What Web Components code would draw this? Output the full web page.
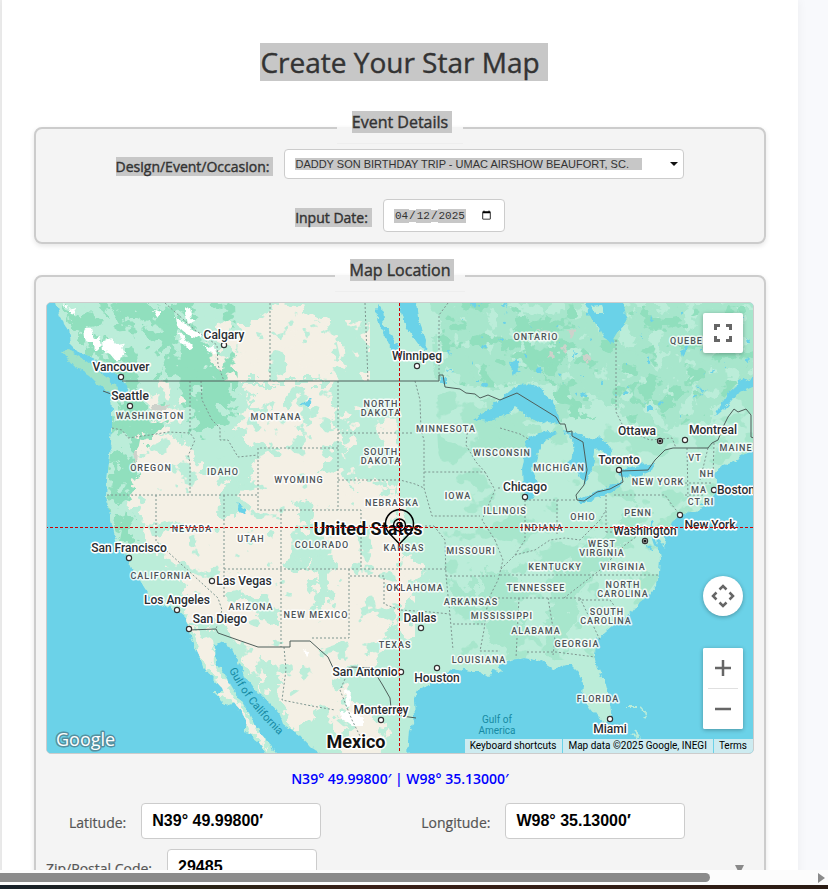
<!DOCTYPE html>
<html lang="en">
<head>
<meta charset="utf-8">
<title>Create Your Star Map</title>
<style>
  body { margin: 0; background: #f8f9fc; font-family: "Open Sans", sans-serif; color: #333; --mark: #c7c7c7; --line: #ccc; }
</style>
</head>
<body>
<star-page>
  <marked-text slot="title">Create Your Star Map</marked-text>
  <form-section heading="Event Details" roomy>
    <select-field label="Design/Event/Occasion:" value="DADDY SON BIRTHDAY TRIP - UMAC AIRSHOW BEAUFORT, SC."></select-field>
    <date-field label="Input Date:" value="2025-04-12"></date-field>
  </form-section>
  <form-section heading="Map Location">
    <location-map></location-map>
    <coordinate-readout>N39° 49.99800′ | W98° 35.13000′</coordinate-readout>
    <field-row>
      <text-field label="Latitude:" value="N39° 49.99800′"></text-field>
      <text-field label="Longitude:" value="W98° 35.13000′"></text-field>
    </field-row>
    <field-row spread>
      <text-field label="Zip/Postal Code:" value="29485" short></text-field>
      <down-arrow></down-arrow>
    </field-row>
  </form-section>
</star-page>

<script>
const define = (name, render) => customElements.define(name, class extends HTMLElement {
  connectedCallback() {
    if (this.shadowRoot) return;
    this.attachShadow({ mode: "open" }).innerHTML = render(this);
  }
});

define("marked-text", () => `
  <style>
    :host { display: inline-block; background: var(--mark); padding-right: 8px; margin-right: -8px; line-height: normal; -webkit-text-stroke: .4px currentColor; }
    :host([tight]) { padding-right: 4px; margin-right: -4px; }
  </style><slot></slot>`);

define("star-page", () => `
  <style>
    :host { display: flex; flex-direction: column; height: 100vh; }
    .view { flex: 1; min-height: 0; overflow: hidden; padding: 0 30px 0 2px; background: linear-gradient(90deg, #eee 2px, #f8f9fc 2px); }
    main { background: #fff; min-height: 100%; box-sizing: border-box; padding: 43px 32px 0; box-shadow: 0 0 10px rgba(0,0,0,.06); }
    h1 { margin: 0 0 30px; font-size: 28px; line-height: 38px; font-weight: 500; text-align: center; }
    .bar { height: 15px; flex: none; display: flex; align-items: center; justify-content: space-between; background: #fcfcfc; padding-right: 3px; }
    .thumb { width: 86%; height: 9px; background: #8b8b8b; border-radius: 0 5px 5px 0; }
    .edge { height: 4px; flex: none; background: linear-gradient(90deg, #17212a, #2a2417 25%, #3a2018 45%, #2b1c14); }
  </style>
  <div class="view"><main><h1><slot name="title"></slot></h1><slot></slot></main></div>
  <div class="bar"><div class="thumb"></div><svg width="7" height="10"><path d="M0 0L7 5L0 10Z" fill="#8b8b8b"/></svg></div>
  <div class="edge"></div>`);

define("form-section", el => `
  <style>
    :host { display: block; margin-bottom: 15px; }
    fieldset { margin: 0; min-width: 0; border: 2px solid var(--line); border-radius: 8px; background: #f4f4f4; padding: 10px; box-shadow: 0 2px 5px rgba(0,0,0,.1); }
    legend { margin: 0 auto; padding: 0 15px 10px; border-bottom: 1px solid #eee; font-size: 16px; line-height: 22px; font-weight: 500; }
    :host([roomy]) fieldset { padding-top: 5px; }
    :host([roomy]) .body { display: grid; gap: 20px; justify-items: center; }
  </style>
  <fieldset><legend><marked-text tight>${el.getAttribute("heading")}</marked-text></legend><div class="body"><slot></slot></div></fieldset>`);

const fieldCss = `
  :host { display: flex; align-items: center; gap: 15px; }
  label { font-size: 14px; line-height: 19px; font-weight: 500; padding-top: 4px; white-space: nowrap; }
  input, select { box-sizing: border-box; margin: 0; border: 1px solid var(--line); border-radius: 4px; background-color: #fff; }`;

define("select-field", el => `
  <style>${fieldCss}
    .box { display: grid; align-items: center; width: 400px; }
    .box > * { grid-area: 1 / 1; }
    select { appearance: none; width: 100%; height: 30px; padding: 0 10px; font: 11px "Liberation Sans", Arial, sans-serif; color: #333;
      background-image: linear-gradient(var(--mark), var(--mark)); background-size: 347px 12px; background-position: 10px 8px; background-repeat: no-repeat; }
    svg { justify-self: end; margin-right: 6px; pointer-events: none; }
  </style>
  <label for="c"><marked-text tight>${el.getAttribute("label")}</marked-text></label>
  <span class="box"><select id="c"><option>${el.getAttribute("value")}</option></select>
  <svg width="8" height="4"><path d="M0 0H8L4 4Z" fill="#111"/></svg></span>`);

define("date-field", el => `
  <style>${fieldCss}
    input { width: 122px; height: 33px; padding: 0 10px; font: 11px "Liberation Mono", "Courier New", monospace; color: #333; }
    ::-webkit-datetime-edit-month-field, ::-webkit-datetime-edit-day-field, ::-webkit-datetime-edit-year-field, ::-webkit-datetime-edit-text { background: var(--mark); }
  </style>
  <label for="c"><marked-text tight>${el.getAttribute("label")}</marked-text></label>
  <input id="c" type="date" value="${el.getAttribute("value")}">`);

define("text-field", el => `
  <style>${fieldCss}
    label { font-weight: 400; color: #555; padding-top: 2px; -webkit-text-stroke: .2px currentColor; }
    input { width: 180px; height: 36px; padding: 0 10px; font: bold 16px "Liberation Sans", Arial, sans-serif; color: #000; }
    :host([short]) input { width: 150px; }
  </style>
  <label for="c">${el.getAttribute("label")}</label><input id="c" type="text" value="${el.getAttribute("value")}">`);

define("coordinate-readout", () => `
  <style>:host { display: block; padding: 15px 0 14px; font-size: 14px; line-height: 20px; font-weight: 600; color: #00f; text-align: center; }</style><slot></slot>`);

define("field-row", () => `
  <style>
    :host { display: flex; gap: 100px; padding-left: 23px; margin-bottom: 10px; }
    :host([spread]) { justify-content: space-between; padding: 0 10px 0 0; }
  </style><slot></slot>`);

define("down-arrow", () => `
  <style>:host { display: block; padding-top: 16px; } svg { display: block; }</style>
  <svg width="9" height="8"><path d="M0 0H9L5 8H4Z" fill="#888"/></svg>`);

/* Map data: all coordinates share the view box of the drawing. */
const LAND = "M55 300L60 318L68 330L70 344L78 352L92 357L104 366L114 372L121 379L125 384L128 394L122 397L119 391L111 394L112 412L112 430L110 455L107 480L106 496L110 515L113 528L117 545L124 551L128 558L133 570L141 582L147 592L160 604L170 608L178 611L185 617L189 628L193 642L199 655L203 667L213 678L222 688L224 693L213 693L220 698L228 706L234 702L240 710L246 720L246 732L258 741L268 756H278L270 745L258 730L248 712L238 697L228 680L216 662L215 645L220 642L233 648L238 660L245 675L257 692L262 695L272 705L280 715L283 724L300 735L310 746L324 756H408L410 730L415 718L414 700L416 692L425 688L432 680L442 675L452 668L470 671L480 671L488 676L493 670L502 673L498 665L510 660L525 658L540 661L553 669L570 664L578 672L583 685L582 695L590 708L598 718L607 725L611 715L610 700L606 685L598 668L595 655L597 640L606 632L620 620L632 612L640 602L648 596L657 585L659 572L660 558L658 546L655 538L651 525L657 535L664 548L666 535L672 522L680 515L690 512L712 505L700 505L708 500L714 494L720 488L714 477L722 465L735 460L748 452L760 446V295H50Z";
const ISLAND = "M62 352L70 350L82 358L94 367L106 377L114 384L118 392L110 392L100 386L90 376L74 366Z";
const SAND = ["M245 384L338 384L334 418L345 440L340 470L352 485L398 490L402 520L402 560L408 580L402 610L385 640L375 660L350 668L335 680L350 700L372 715L350 732L330 715L315 700L300 690L285 700L262 690L240 655L225 625L200 622L172 607L192 590L160 560L150 530L130 505L138 470L140 440L160 430L185 440L200 470L225 480L238 450L226 420Z",
 "M150 400L165 380L185 400L180 425L155 430Z","M205 345L220 360L232 320L258 320L290 300L315 318L335 335L342 365L330 380H238L215 364Z",
 "M185 622L212 640L216 662L240 700L256 730L270 752L252 740L240 708L222 692L205 668Z","M330 705L385 722L378 760H350Z","M403 556L424 562L420 580L405 584Z","M274 650L330 660L325 700L295 730L280 712L262 680Z"];
const GREEN_SAND = ["M230 395L243 402L240 425L254 455L240 500L236 525L218 515L228 480L216 450Z","M310 520L330 540L332 580L318 592L308 560L296 545Z","M292 548L308 556L306 572L290 566Z","M320 570L328 600L318 618L312 590Z","M240 590L262 600L282 614L276 622L250 610Z","M130 575L142 570L160 590L170 602L158 600Z","M262 654L276 672L274 700L294 726L306 745L288 730L264 690Z","M358 680L372 675L374 690L364 700Z","M340 440L344 470L320 476L330 450Z","M300 500L316 510L310 526L298 516Z","M250 400L268 410L262 420Z"];
const MID = ["M460 300H585L600 340H612L630 303H760V370L735 385L710 415L690 420L660 436L640 432L610 402L560 400L548 383L500 388L460 386L440 372L436 330Z","M480 395L510 415L540 428L530 450L505 452L482 440Z","M560 565L600 535L640 500L650 515L615 555L580 590L560 660L545 630Z","M480 570L520 580L515 655L495 645L485 620Z","M450 580L478 585L478 610L452 606Z"];
const DARK = ["M100 303H170L190 330L215 360L235 385L235 410L215 425L195 440L192 415L175 380L160 375L165 340L130 325Z","M122 400L145 395L150 430L140 480L120 520L108 500L115 460Z","M60 303L80 315L110 355L135 372L142 410L120 400L116 370L82 350Z","M520 318L550 325L575 345L560 372L530 365L505 350Z","M624 385L680 388L676 405L645 410Z","M540 368L570 390L590 420L560 412Z","M115 500L130 520L135 545L120 540L112 522Z"];
const SNOW = ["M83 328L91 328L93 336L97 344H91L84 338ZM94 338L99 336L102 346L98 350L94 346ZM103 340L112 338L116 344L122 343L125 352L121 360H115L110 354L104 352Z","M63 304L68 306L66 309ZM68 309L74 307L76 315L71 314Z","M184 308L190 310L194 322L188 324ZM175 318L184 322L192 330L202 335L200 338L186 334L176 326ZM178 331L184 338L194 348L190 350L180 340ZM204 347L214 346L217 354L208 352Z","M345 688L352 690L350 706L346 708ZM341 710L352 712L362 716L362 726L352 726L342 718Z","M152 310L162 312L157 318Z","M304 648L310 654L306 658Z"];
const GREY = ["M152 405L170 405L166 411L150 410Z","M536 328L550 330L548 336ZM546 356L552 350L554 358ZM560 348L567 344L566 354ZM582 355L590 356L588 362ZM568 332L576 330L572 338Z","M134 452L138 452L137 462L134 462Z"];
const LAKES = ["M473 419L490 408L510 391L517 385L530 384L540 387L545 395L553 400L558 412L560 424L548 421L540 424L528 416L515 407L508 414L500 418L490 421Z",
 "M527 440L535 434L548 431L558 434L545 440L537 455L533 470L537 482L534 497L528 501L523 490L522 470L525 452Z",
 "M563 430L580 434L590 440L600 437L610 448L612 457L602 453L596 447L594 460L590 478L584 483L577 470L568 462L574 452L572 439Z",
 "M577 500L590 494L605 487L622 481L621 487L604 495L590 502L580 502Z","M619 474L625 468L640 465L656 463L653 470L640 476L622 477Z",
 "M586 301L587 315L597 325L604 338L612 342L618 332L627 322L625 310L622 301Z","M398 301L416 301L418 318L426 340L425 352L416 340L405 325Z","M377 303L382 308L384 325L399 348L396 358L388 342L378 320Z",
 "M237 502L244 509L246 515L240 513Z","M760 374L742 381L728 393L717 412L714 418L725 408L738 393L760 384Z","M510 362L518 360L519 372L513 374Z","M118 378L127 385L128 397L121 390Z","M440 376L447 377L447 384L442 384Z","M681 350L690 340L690 345L683 356Z","M300 405L312 399L308 406ZM575 356L574 349L577 355ZM698 386L706 390L701 391ZM650 316L654 322L649 320Z"];
const SOLID = ["M122 381H439V375H443L445 387L460 389L466 393L475 394L480 398L488 395L500 400L517 393L556 417L560 424L565 424L567 432L572 431V436L583 442L587 470L584 485L576 495L577 500L584 501L597 492L610 489L623 482L621 471L648 470L655 460L665 450L673 448H708L712 443L718 440L724 425L728 417L734 409L738 412L746 409L751 415V437L756 439","M189 630L216 629L218 633L258 647H290V641H310L320 650L328 657L335 672L352 667L372 668L382 684L390 698L391 708L402 716L416 718","M103 391L111 394"];
const DASH = "M190 381V433M112 428L122 430L128 438L150 435L168 432L190 433L195 440L188 456L190 462V495M107 495H258M156 495V541L218 598L222 610L216 629M224 495V598M201 381L202 400L212 420L220 428V440L228 440L238 457L258 455M338 448H258V510H361V569M338 381V510M338 433H414M338 480H400L415 484L424 488M361 526H434M224 569H446M281 510V647M349 569V638H310M350 576H384V604L400 610L430 612L450 614M434 526L445 540L446 576L450 615L453 650M446 576H495M453 624H485M415 381L420 400L421 430L424 440V488L432 516H480M495 540L503 560L498 580L488 600L484 630L480 651H500M468 425L466 445L476 462L485 472H424M485 472L495 490L482 520L495 540M270 303V381M365 303L368 381M448 303L439 315V375M165 303L195 330L217 345L218 365L224 381M616 340V412L625 430L650 440L672 438L676 448M525 500V540L515 555L500 570M557 500V536M498 488H523M525 500H577M606 495V532M614 495H665L672 505L680 515M606 532H660M500 575H660M490 598H580M519 598L516 658M548 598L555 640L553 655M527 652H556L595 657M515 555L535 550L550 540L565 538L580 540L600 520L606 510M564 598L600 570L625 545L640 534M580 598L600 640M578 600L610 600L625 620M687 448L688 497M708 448L700 480M714 443L713 478M685 483H712M685 495H705M500 428L520 434L530 440M284 647L286 670L282 700L312 706L335 710M350 668L340 690L352 720L362 740";
const STATES = [["ONTARIO",536,340],["MONTANA",276,420],["WASHINGTON",150,419],["OREGON",151,471],["IDAHO",223,475],["WYOMING",299,483],["NORTH",381,407],["DAKOTA",381,416],["SOUTH",381,455],["DAKOTA",381,464],["MINNESOTA",446,432],["WISCONSIN",502,456],["MICHIGAN",559,471],["NEBRASKA",392,506],["IOWA",458,499],["ILLINOIS",505,514],["INDIANA",542,531],["OHIO",583,520],["PENN",638,516],["NEW YORK",658,485],["MAINE",736,451],["VT",695,461],["NH",707,477],["MA",699,493],["CT RI",701,505],["NEVADA",192,532],["UTAH",251,542],["COLORADO",322,548],["KANSAS",404,551],["MISSOURI",471,554],["CALIFORNIA",161,579],["ARIZONA",251,610],["NEW MEXICO",316,618],["OKLAHOMA",415,591],["ARKANSAS",471,605],["TENNESSEE",536,591],["KENTUCKY",555,570],["WEST",602,547],["VIRGINIA",602,556],["VIRGINIA",623,570],["NORTH",623,588],["CAROLINA",623,597],["SOUTH",607,615],["CAROLINA",606,624],["MISSISSIPPI",502,619],["ALABAMA",536,634],["GEORGIA",577,647],["TEXAS",395,648],["LOUISIANA",479,663],["FLORIDA",598,702]];
const CITIES = [["Calgary",224,339,224,345],["Vancouver",121,371,121,377],["Seattle",130,400,130,406],["Winnipeg",417,360,417,366],["Ottawa",637,435,660,441,1],["Montreal",713,434,685,440],["Toronto",619,464,619,470],["Chicago",525,491,525,497],["Boston",736,494,714,490],["New York",710,529,680,515],["Washington",645,535,645,541,1],["San Francisco",129,552,129,558],["Las Vegas",244,585,212,581],["Los Angeles",177,604,177,610],["San Diego",220,623,189,629],["Dallas",420,622,421,628],["Houston",437,682,437,668],["San Antonio",365,676,401,672],["Monterrey",381,714,381,720],["Miami",610,733,610,719]];
const paths = (list, fill) => `<g fill="${fill}">${list.map(d => `<path d="${d}"/>`).join("")}</g>`;
const patch = (id, seed, freq, color, cut) => `<filter id="${id}" x="0" y="0" width="1" height="1" color-interpolation-filters="sRGB"><feTurbulence type="fractalNoise" baseFrequency="${freq}" numOctaves="4" seed="${seed}"/><feColorMatrix values="0 0 0 0 0 0 0 0 0 0 0 0 0 0 0 30 0 0 0 ${-30 * cut}" result="m"/><feFlood flood-color="${color}"/><feComposite operator="in" in2="m"/></filter>`;
const noise = (id, clip) => `<g clip-path="url(#${clip})"><rect x="47" y="303" width="706" height="450" filter="url(#${id})"/></g>`;

define("location-map", () => `
  <style>
    :host { display: block; position: relative; height: 450px; border: 1px solid var(--line); border-radius: 5px; overflow: hidden; background: #6bd2e8; font-family: Roboto, sans-serif; }
    .map { display: block; width: 100%; height: 100%; }
    text { font-family: Roboto, sans-serif; font-weight: 500; paint-order: stroke; stroke: #fff; stroke-width: 3px; stroke-linejoin: round; text-anchor: middle; fill: #2a2e33; font-size: 12px; }
    .state text { font-size: 9px; letter-spacing: 1px; fill: #4d5357; stroke-opacity: .8; }
    text.big { font-size: 18px; font-weight: 700; fill: #111; }
    text.sea { font-size: 11px; font-weight: 400; fill: #168aa3; stroke: none; }
    text.small { font-size: 10px; }
    text.logo { font: 500 18px "Open Sans", sans-serif; fill: #fff; stroke: #54909f; text-anchor: start; }
    button { position: absolute; right: 10px; width: 40px; height: 40px; border: 0; padding: 0; background: #fff; border-radius: 2px; box-shadow: 0 1px 4px rgba(0,0,0,.3); display: grid; place-items: center; }
    .full { top: 10px; } .pan { top: 273px; border-radius: 50%; }
    .zoom { position: absolute; right: 10px; bottom: 24px; width: 40px; background: #fff; border-radius: 2px; box-shadow: 0 1px 4px rgba(0,0,0,.3); }
    .zoom button { position: static; box-shadow: none; }
    .zoom hr { margin: 0 5px; border: 0; height: 1px; background: #e0e0e0; }
    .legal { position: absolute; right: 0; bottom: 0; display: flex; gap: 1px; font-size: 10px; line-height: 14px; }
    .legal > * { background: #cdebf0; padding: 0 6px 0 5px; color: #000; text-decoration: none; white-space: nowrap; }
  </style>
  <svg class="map" viewBox="47 303 706 450" preserveAspectRatio="xMidYMid slice">
    <defs>
      <filter id="rough" x="-.1" y="-.1" width="1.2" height="1.2"><feTurbulence type="fractalNoise" baseFrequency=".07" numOctaves="4" seed="4"/><feDisplacementMap in="SourceGraphic" scale="30" xChannelSelector="R" yChannelSelector="G"/></filter>
      <filter id="coast" x="-.1" y="-.1" width="1.2" height="1.2"><feTurbulence type="fractalNoise" baseFrequency=".15" numOctaves="3" seed="9"/><feDisplacementMap in="SourceGraphic" scale="7" xChannelSelector="R" yChannelSelector="G"/></filter>
      ${patch("pg", 3, ".045 .05", "#bbedd9", .63)}${patch("pm", 8, ".03 .035", "#a7e6cc", .56)}${patch("pd", 12, ".05 .06", "#90dfbd", .6)}${patch("ps", 21, ".05 .05", "#f4f0e5", .57)}${patch("pl", 33, ".06 .06", "#bbedd9", .6)}${patch("pw", 17, ".09 .09", "#6bd2e8", .75)}
      <clipPath id="land"><path d="${LAND}"/></clipPath>
      <clipPath id="sand"><path d="${SAND.slice(0, 3).join("")}"/></clipPath>
      <clipPath id="northsand"><path d="M140 384H345V450H140Z"/></clipPath>
      <clipPath id="east"><path d="M430 303H753V450L700 520L600 660H450Z"/></clipPath>
      <clipPath id="shield"><path d="${MID[0]}"/></clipPath>
      <clipPath id="nw"><path d="M60 303H235L240 440L140 440L120 540H100Z"/></clipPath>
      <clipPath id="plain"><path d="M205 320H370V381H205ZM338 400H400V500H338ZM360 560H415V650H380Z"/></clipPath>
    </defs>
    <rect x="-2000" y="0" width="5000" height="2000" fill="#6bd2e8"/>
    <g filter="url(#coast)"><path d="${LAND}" fill="#bbedd9"/><path d="${ISLAND}" fill="#a0e2c6"/></g>
    <g clip-path="url(#land)">
      <g filter="url(#rough)">${paths(MID, "#a7e6cc")}${paths(DARK, "#90dfbd")}${paths(SAND, "#f4f0e5")}${paths(GREEN_SAND, "#bbedd9")}</g>
      ${noise("pm", "east")}${noise("pl", "shield")}${noise("pd", "shield")}${noise("pl", "nw")}${noise("pd", "nw")}${noise("ps", "plain")}${noise("pg", "sand")}${noise("pl", "northsand")}${noise("pw", "shield")}
      <g filter="url(#coast)">${paths(SNOW, "#fff")}${paths(GREY, "#cdd2cb")}</g>
    </g>
    <g filter="url(#coast)">${paths(LAKES, "#6bd2e8")}<path d="M590 306L602 305L605 313L597 313Z" fill="#bbedd9"/><path d="M627 707L636 707L636 709M641 707L646 713L643 718M634 728L638 738L632 734" fill="none" stroke="#bbedd9" stroke-width="2"/><path d="M655 545L650 530L652 520M660 550L654 542M646 545L652 550" stroke="#6bd2e8" stroke-width="2" fill="none"/></g>
    <path d="${DASH}" fill="none" stroke="#7f9690" stroke-width="1" stroke-dasharray="2 2"/>
    <g fill="none" stroke="#4e5e5a">${SOLID.map(d => `<path d="${d}"/>`).join("")}</g>
    <g class="state">${STATES.map(([t, x, y]) => `<text x="${x}" y="${y}">${t}</text>`).join("")}<text x="670" y="344" style="text-anchor:start">QUEBEC</text></g>
    <g fill="#fff" stroke="#333" stroke-width="1.2">${CITIES.map(c => `<circle cx="${c[3]}" cy="${c[4]}" r="2.6"/>${c[5] ? `<circle cx="${c[3]}" cy="${c[4]}" r="1" stroke="#000"/>` : ""}`).join("")}</g>
    ${CITIES.map(([t, x, y]) => `<text x="${x}" y="${y}">${t}</text>`).join("")}
    <text class="big" x="368" y="535">United States</text><text class="big" x="356" y="748">Mexico</text>
    <text class="sea small" x="497" y="723">Gulf of</text><text class="sea small" x="497" y="734">America</text>
    <path id="gulf" d="M229 670Q246 704 282 738" fill="none"/><text class="sea" style="text-anchor:start"><textPath href="#gulf">Gulf of California</textPath></text>
    <text class="logo" x="56" y="746">Google</text>
    <g fill="none" stroke="#000" stroke-width="1.5"><path d="M399.500 544L389 533A14 14 0 1 1 410 533Z"/><circle cx="399.500" cy="525" r="6"/><circle cx="399.500" cy="525" r="2.500"/></g>
    <path d="M399.500 303V753M-1000 527.500H2000" stroke="#d00000" stroke-dasharray="3 2" fill="none"/>
  </svg>
  <button class="full" aria-label="Toggle fullscreen view"><svg width="18" height="18"><path d="M1.500 6V1.500H6M12 1.500H16.500V6M16.500 12V16.500H12M6 16.500H1.500V12" fill="none" stroke="#666" stroke-width="3"/></svg></button>
  <button class="pan" aria-label="Map camera controls"><svg width="24" height="24"><path d="M8.500 5.500L12 2L15.500 5.500M8.500 18.500L12 22L15.500 18.500M5.500 8.500L2 12L5.500 15.500M18.500 8.500L22 12L18.500 15.500" fill="none" stroke="#666" stroke-width="2.500"/></svg></button>
  <div class="zoom"><button aria-label="Zoom in"><svg width="18" height="18"><path d="M1 9H17M9 1V17" stroke="#666" stroke-width="2.500"/></svg></button><hr><button aria-label="Zoom out"><svg width="18" height="18"><path d="M1 9H17" stroke="#666" stroke-width="2.500"/></svg></button></div>
  <div class="legal"><a href="#keys">Keyboard shortcuts</a><span>Map data ©2025 Google, INEGI</span><a href="#terms">Terms</a></div>`);
</script>
</body>
</html>
